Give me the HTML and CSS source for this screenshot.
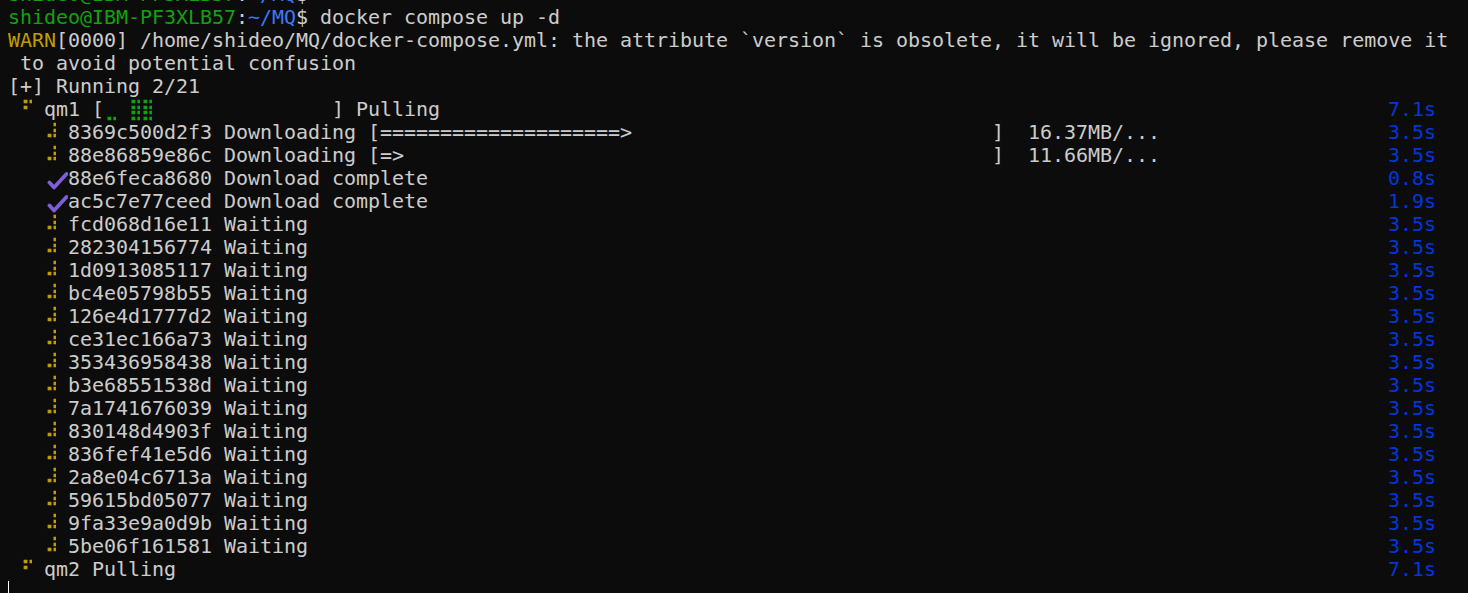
FILE: index.html
```html
<!DOCTYPE html>
<html>
<head>
<meta charset="utf-8">
<link rel="stylesheet" href="styles.css">
</head>
<body>
<div class="term">
  <div class="row"><span><span class="g">shideo@IBM-PF3XLB57</span>:<span class="b">~/MQ</span>$</span></div>
  <div class="row"><span><span class="g">shideo@IBM-PF3XLB57</span>:<span class="b">~/MQ</span>$ docker compose up -d</span></div>
  <div class="row"><span><span class="y">WARN</span>[0000] /home/shideo/MQ/docker-compose.yml: the attribute `version` is obsolete, it will be ignored, please remove it</span></div>
  <div class="row"><span> to avoid potential confusion</span></div>
  <div class="row"><span>[+] Running 2/21</span></div>
  <div class="row"><span> <span class="c y">⠋</span> qm1 [<span class="c g">⣀</span> <span class="c g">⣿</span><span class="c g">⣿</span>               ] Pulling</span><span class="t">7.1s</span></div>
  <div class="row"><span>   <span class="c y">⠼</span> 8369c500d2f3 Downloading [====================&gt;                              ]  16.37MB/...</span><span class="t">3.5s</span></div>
  <div class="row"><span>   <span class="c y">⠼</span> 88e86859e86c Downloading [=&gt;                                                 ]  11.66MB/...</span><span class="t">3.5s</span></div>
  <div class="row"><span>   <span class="chk"><svg viewBox="0 0 24 23" width="24" height="23"><path d="M5.5 15.5 L10 20.5 L22.5 7" fill="none" stroke="#7c5ed6" stroke-width="3.8" stroke-linecap="round" stroke-linejoin="round"/></svg></span>88e6feca8680 Download complete</span><span class="t">0.8s</span></div>
  <div class="row"><span>   <span class="chk"><svg viewBox="0 0 24 23" width="24" height="23"><path d="M5.5 15.5 L10 20.5 L22.5 7" fill="none" stroke="#7c5ed6" stroke-width="3.8" stroke-linecap="round" stroke-linejoin="round"/></svg></span>ac5c7e77ceed Download complete</span><span class="t">1.9s</span></div>
  <div class="row"><span>   <span class="c y">⠼</span> fcd068d16e11 Waiting</span><span class="t">3.5s</span></div>
  <div class="row"><span>   <span class="c y">⠼</span> 282304156774 Waiting</span><span class="t">3.5s</span></div>
  <div class="row"><span>   <span class="c y">⠼</span> 1d0913085117 Waiting</span><span class="t">3.5s</span></div>
  <div class="row"><span>   <span class="c y">⠼</span> bc4e05798b55 Waiting</span><span class="t">3.5s</span></div>
  <div class="row"><span>   <span class="c y">⠼</span> 126e4d1777d2 Waiting</span><span class="t">3.5s</span></div>
  <div class="row"><span>   <span class="c y">⠼</span> ce31ec166a73 Waiting</span><span class="t">3.5s</span></div>
  <div class="row"><span>   <span class="c y">⠼</span> 353436958438 Waiting</span><span class="t">3.5s</span></div>
  <div class="row"><span>   <span class="c y">⠼</span> b3e68551538d Waiting</span><span class="t">3.5s</span></div>
  <div class="row"><span>   <span class="c y">⠼</span> 7a1741676039 Waiting</span><span class="t">3.5s</span></div>
  <div class="row"><span>   <span class="c y">⠼</span> 830148d4903f Waiting</span><span class="t">3.5s</span></div>
  <div class="row"><span>   <span class="c y">⠼</span> 836fef41e5d6 Waiting</span><span class="t">3.5s</span></div>
  <div class="row"><span>   <span class="c y">⠼</span> 2a8e04c6713a Waiting</span><span class="t">3.5s</span></div>
  <div class="row"><span>   <span class="c y">⠼</span> 59615bd05077 Waiting</span><span class="t">3.5s</span></div>
  <div class="row"><span>   <span class="c y">⠼</span> 9fa33e9a0d9b Waiting</span><span class="t">3.5s</span></div>
  <div class="row"><span>   <span class="c y">⠼</span> 5be06f161581 Waiting</span><span class="t">3.5s</span></div>
  <div class="row"><span> <span class="c y">⠋</span> qm2 Pulling</span><span class="t">7.1s</span></div>
  <div class="row"><span class="cursor"></span></div>
</div>
</body>
</html>
```
FILE: styles.css
```css
html, body {
  margin: 0;
  padding: 0;
  background: #0c0c0c;
  height: 100%;
  overflow: hidden;
}
.term {
  margin-top: -17px;
  padding-left: 8px;
  font-family: "DejaVu Sans Mono", monospace;
  font-size: 20px;
  letter-spacing: -0.04px;
  color: #cccccc;
}
.row {
  display: flex;
  justify-content: space-between;
  width: 1428px;
  height: 23px;
  line-height: 23px;
  white-space: pre;
}
.c {
  display: inline-block;
  width: 12px;
  text-align: center;
  vertical-align: top;
  overflow: hidden;
  font-weight: bold;
  letter-spacing: -4px;
}
.g { color: #13a10e; }
.b { color: #3b78ff; }
.y { color: #c19c00; }
.t { color: #0037da; }
.chk {
  display: inline-block;
  width: 24px;
  height: 23px;
  vertical-align: top;
}
.chk svg { display: block; }
.cursor {
  display: inline-block;
  width: 1px;
  height: 13px;
  background: #ffffff;
}
```
